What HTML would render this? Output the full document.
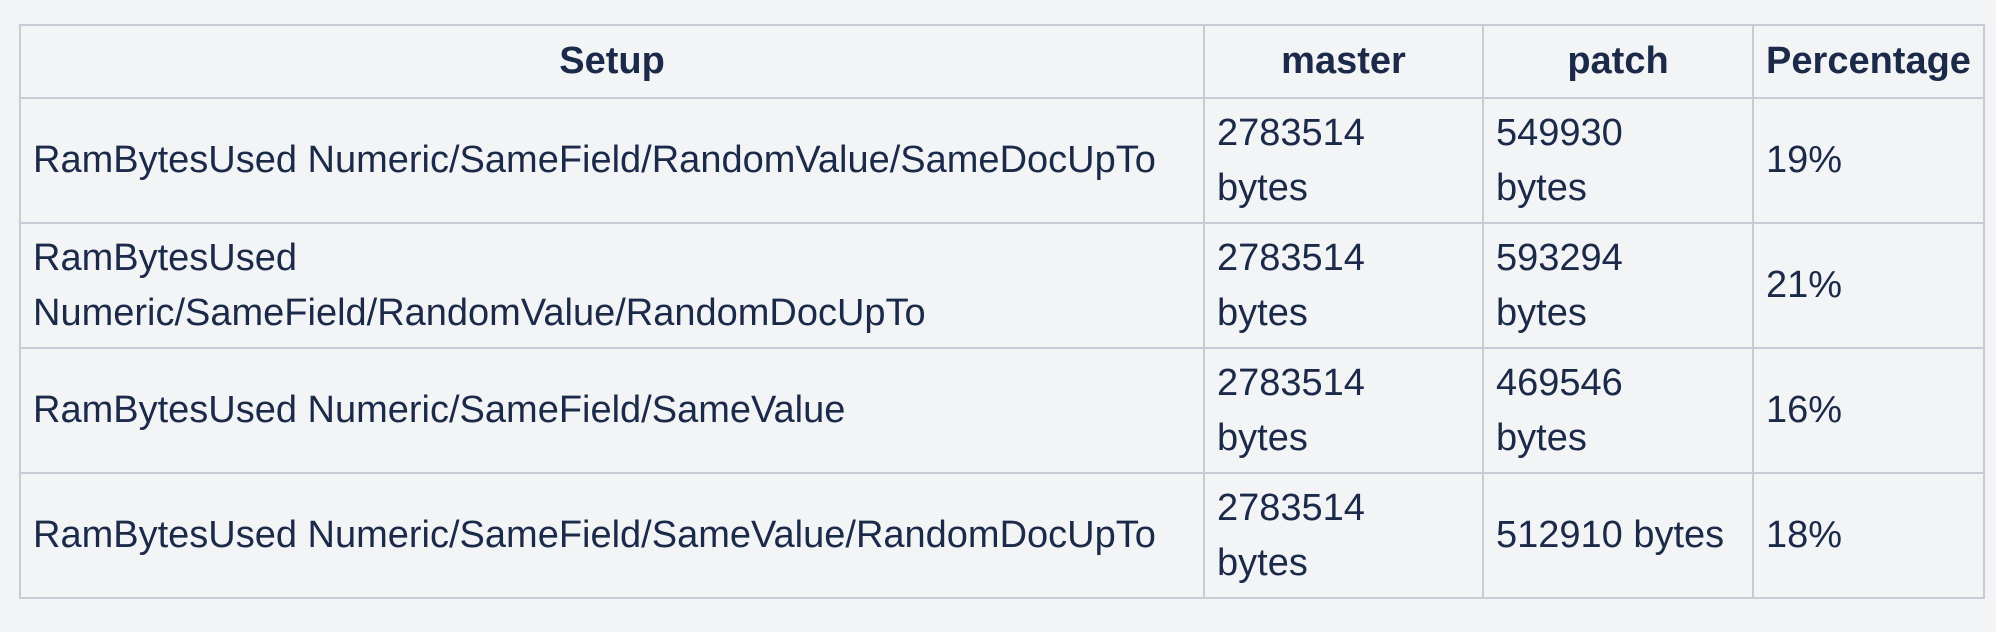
<!DOCTYPE html>
<html><head><style>
html,body{margin:0;padding:0;background:#f3f4f6;width:1996px;height:632px;overflow:hidden}
table{position:absolute;left:19px;top:24px;border-collapse:collapse;table-layout:fixed;font-family:"Liberation Sans",sans-serif;font-size:38px;color:#1c2a4a;line-height:55px}
td,th{border:2px solid #c6cbd5;padding:0 0 0 12px;vertical-align:middle;text-align:left;white-space:nowrap;overflow:hidden}
th{text-align:center;font-weight:bold;height:71px;padding:0}
td{height:123px}
</style></head><body>
<table>
<colgroup><col style="width:1184px"><col style="width:279px"><col style="width:270px"><col style="width:231px"></colgroup>
<tr><th>Setup</th><th>master</th><th>patch</th><th>Percentage</th></tr>
<tr><td>RamBytesUsed Numeric/SameField/RandomValue/SameDocUpTo</td><td>2783514<br>bytes</td><td>549930<br>bytes</td><td>19%</td></tr>
<tr><td>RamBytesUsed<br>Numeric/SameField/RandomValue/RandomDocUpTo</td><td>2783514<br>bytes</td><td>593294<br>bytes</td><td>21%</td></tr>
<tr><td>RamBytesUsed Numeric/SameField/SameValue</td><td>2783514<br>bytes</td><td>469546<br>bytes</td><td>16%</td></tr>
<tr><td>RamBytesUsed Numeric/SameField/SameValue/RandomDocUpTo</td><td>2783514<br>bytes</td><td>512910 bytes</td><td>18%</td></tr>
</table>
</body></html>
